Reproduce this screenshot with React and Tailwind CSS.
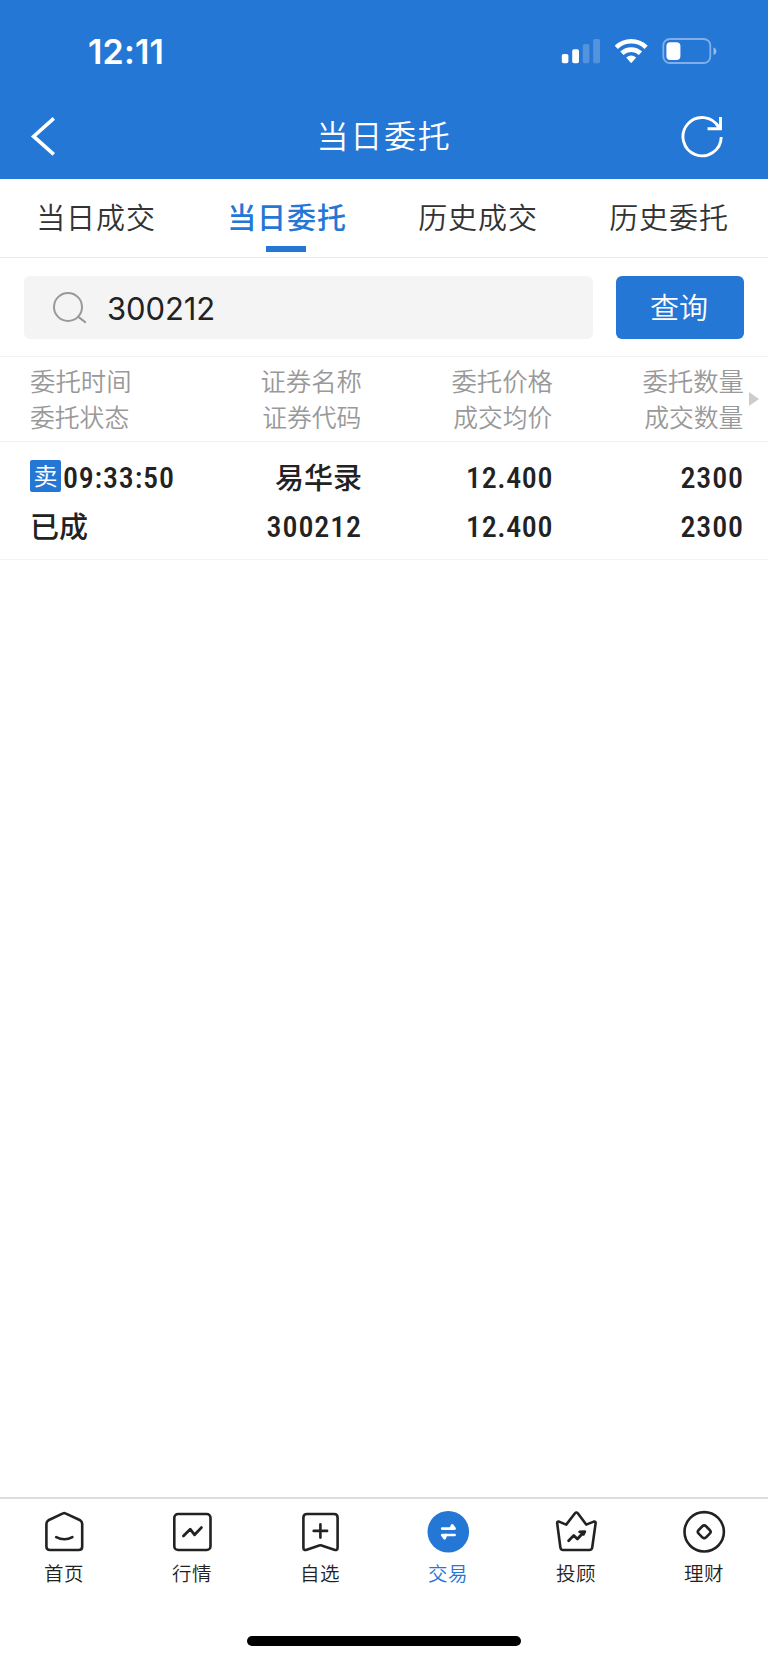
import clsx from 'clsx'

const tabs = ['当日成交', '当日委托', '历史成交', '历史委托']

const columns = [
  ['委托时间', '委托状态'],
  ['证券名称', '证券代码'],
  ['委托价格', '成交均价'],
  ['委托数量', '成交数量'],
]

const orders = [
  {
    side: '卖',
    time: '09:33:50',
    status: '已成',
    name: '易华录',
    code: '300212',
    price: '12.400',
    avgPrice: '12.400',
    amount: '2300',
    filled: '2300',
  },
]

const navItems = [
  { label: '首页', icon: HomeIcon },
  { label: '行情', icon: MarketIcon },
  { label: '自选', icon: WatchlistIcon },
  { label: '交易', icon: TradeIcon },
  { label: '投顾', icon: AdvisorIcon },
  { label: '理财', icon: WealthIcon },
]

function NavSvg({ children }) {
  return (
    <svg
      className="w-[44px] h-[44px]"
      viewBox="0 0 44 44"
      fill="none"
      stroke="currentColor"
      strokeWidth="2.6"
      strokeLinecap="round"
      strokeLinejoin="round"
    >
      {children}
    </svg>
  )
}

function HomeIcon() {
  return (
    <NavSvg>
      <path d="M21 3.4Q22.2 2.8 23.4 3.4L38.2 10.3Q40.2 11.5 40.2 14V36.4Q40.2 40 36.6 40H8Q4.4 40 4.4 36.4V14Q4.4 11.5 6.4 10.3Z" />
      <path d="M14.2 27.2Q22.4 31.4 30.4 27.2" />
    </NavSvg>
  )
}

function MarketIcon() {
  return (
    <NavSvg>
      <rect x="4.3" y="4" width="36.2" height="36" rx="3.8" />
      <path d="M13.4 26L20.2 19.2L24.6 24.8L31.4 17.6" strokeWidth="2.8" />
    </NavSvg>
  )
}

function WatchlistIcon() {
  return (
    <NavSvg>
      <path d="M9 4H36Q39.6 4 39.6 7.6V37.4Q39.6 40.8 36.2 39.7L23.6 35.4Q22.4 35 21.2 35.4L8.8 39.7Q5.4 40.8 5.4 37.4V7.6Q5.4 4 9 4Z" />
      <path d="M22.4 14.2V27.6M15.7 20.9H29.1" />
    </NavSvg>
  )
}

function TradeIcon() {
  return (
    <NavSvg>
      <circle cx="22.3" cy="21.8" r="20.8" fill="currentColor" stroke="none" />
      <path
        d="M16.2 18.6H28.6L26.2 15.4L24.8 18.6M28.6 25H16.2L18.6 28.2L20 25"
        fill="white"
        stroke="white"
        strokeWidth="2.7"
      />
    </NavSvg>
  )
}

function AdvisorIcon() {
  return (
    <NavSvg>
      <path d="M20.8 3.5Q22.4 1.6 24 3.5L32.2 14.6L39.8 11.6Q41.9 11.2 41.6 13.4L38.2 37.6Q37.8 40 35.4 40H9Q6.8 40 6.4 37.6L3.2 13.4Q2.9 11.2 5 11.6L12.2 14.6Z" />
      <path d="M14.6 30.8L19.8 25.4L23.4 29L29.6 22.2M25.6 21.8L30.8 21.6L29.4 24.4" strokeWidth="2.8" />
    </NavSvg>
  )
}

function WealthIcon() {
  return (
    <NavSvg>
      <circle cx="22.2" cy="21.8" r="19.7" />
      <rect x="17" y="16.6" width="10.4" height="10.4" rx="2.6" transform="rotate(45 22.2 21.8)" />
    </NavSvg>
  )
}

function StatusBar() {
  return (
    <div className="h-[94px] pt-[8px] pl-[88px] pr-[51px] flex items-center justify-between">
      <span className="pt-[1px] font-['Inter'] font-semibold text-[34px] tracking-[0.2px] leading-none">
        12:11
      </span>
      <svg className="w-[156px] h-[26px]" viewBox="0 0 156 26" fill="white">
        <rect x="0.8" y="16" width="6.6" height="9.2" rx="1.8" />
        <rect x="11.2" y="11.3" width="6.8" height="13.9" rx="1.8" />
        <rect x="21.8" y="6" width="6.6" height="19.2" rx="1.8" opacity="0.22" />
        <rect x="32.2" y="1" width="6.8" height="24.2" rx="1.8" opacity="0.22" />
        <g fill="none" stroke="white" strokeWidth="4.6">
          <path d="M55.3 9.3A21.5 21.5 0 0 1 85.1 9.3" />
          <path d="M60.9 15.3A13.6 13.6 0 0 1 79.5 15.3" />
        </g>
        <path d="M65.2 19.4Q70.2 15.6 75.2 19.4L70.9 24.6Q70.2 25.3 69.5 24.6Z" />
        <rect
          x="102.3" y="1" width="47" height="24" rx="6.5"
          fill="none" stroke="white" strokeWidth="1.8" opacity="0.42"
        />
        <path d="M152.5 9.4Q155.4 10.4 155.4 13.2T152.5 17Z" opacity="0.5" />
        <rect x="105.4" y="4.2" width="14" height="17.8" rx="4" />
      </svg>
    </div>
  )
}

function TitleBar() {
  return (
    <div className="h-[85px] pl-[30px] pr-[44px] flex items-center justify-between">
      <svg className="w-[28px] h-[42px]" viewBox="0 0 28 42" fill="none" stroke="white" strokeWidth="3.6">
        <path d="M23.8 2.4L3.6 20.4L23.8 38.4" />
      </svg>
      <h1 className="pl-[30px] pb-[5px] text-[32px] tracking-[1.8px] leading-none font-[350]">当日委托</h1>
      <svg className="w-[44px] h-[44px]" viewBox="0 0 44 44" fill="none" stroke="white" strokeWidth="2.9">
        <path d="M41.2 21.9A19.1 19.1 0 1 1 38.8 12.4" />
        <path d="M40.5 2V13.7H27.6" />
        <path d="M36 8.6L40.2 13.6" />
      </svg>
    </div>
  )
}

function OrderRow({ order }) {
  return (
    <div className="h-[118px] pt-[11px] pl-[30px] grid grid-cols-[141px_191px_191px_191px] leading-[49px] text-right text-[29px] font-medium text-[#222222] border-b border-[#f3f3f3]">
      <div className="text-left whitespace-nowrap">
        <div className="h-[49px] flex items-center">
          <span className="w-[31px] h-[32px] mb-[3px] shrink-0 bg-[#2577d6] rounded-[2px] text-white text-[24px] font-normal leading-[30px] text-center">
            {order.side}
          </span>
          <span className="pl-[2px] font-['Roboto'] text-[30px] [font-stretch:75%] tracking-[0.8px]">{order.time}</span>
        </div>
        <div className="-mt-px">{order.status}</div>
      </div>
      <div>
        <div className="-mt-px mb-px">{order.name}</div>
        <div className="font-['Roboto'] text-[30px] [font-stretch:75%] tracking-[0.9px]">{order.code}</div>
      </div>
      <div className="font-['Roboto'] text-[30px] [font-stretch:75%] tracking-[0.6px]">
        <div>{order.price}</div>
        <div>{order.avgPrice}</div>
      </div>
      <div className="font-['Roboto'] text-[30px] [font-stretch:75%] tracking-[0.9px]">
        <div>{order.amount}</div>
        <div>{order.filled}</div>
      </div>
    </div>
  )
}

export default function App() {
  return (
    <div className="w-[768px] h-[1663px] flex flex-col bg-white overflow-hidden font-['Noto_Sans_CJK_SC','Noto_Sans',sans-serif]">
      <header className="bg-[#2577d6] text-white">
        <StatusBar />
        <TitleBar />
      </header>

      {/* Tabs */}
      <nav className="h-[79px] grid grid-cols-[repeat(4,191px)] border-b border-[#ebebeb]">
        {tabs.map((tab) => {
          const active = tab === '当日委托'
          return (
            <button
              key={tab}
              className={clsx(
                'relative pl-[1px] pb-[3px] text-[29px] tracking-[0.9px]',
                active ? 'text-[#2577d6] font-medium' : 'text-[#333333] font-[350]'
              )}
            >
              {tab}
              {active && (
                <span className="absolute left-[75px] bottom-[5px] w-[40px] h-[6px] bg-[#2577d6]" />
              )}
            </button>
          )
        })}
      </nav>

      {/* Search */}
      <div className="h-[99px] px-[24px] flex items-center gap-[23px] border-b border-[#f3f3f3]">
        <div className="flex-1 h-[63px] pl-[28px] flex items-center rounded-[6px] bg-[#f4f4f4]">
          <svg className="w-[36px] h-[34px] mt-[2px]" viewBox="0 0 36 34" fill="none" stroke="#999999" strokeWidth="2">
            <circle cx="16" cy="16" r="14" />
            <path d="M26 25.6L33.8 31.6" />
          </svg>
          <span className="pl-[19px] pt-[4px] font-['Inter'] text-[31px] tracking-[-0.1px] text-[#222222]">
            300212
          </span>
        </div>
        <button className="w-[128px] h-[63px] pr-[2px] rounded-[6px] bg-[#2577d6] text-white text-[29px] font-[350]">
          查询
        </button>
      </div>

      {/* Table head */}
      <div className="relative h-[85px] pt-[5px] pl-[30px] grid grid-cols-[141px_191px_191px_191px] text-right leading-[36px] font-[350] text-[#999999] border-b border-[#f3f3f3]">
        {columns.map(([top, bottom]) => (
          <div key={top} className="first:text-left">
            <div className="text-[25.4px]">{top}</div>
            <div className="pr-[0.6px] text-[24.8px]">{bottom}</div>
          </div>
        ))}
        <svg className="absolute left-[749px] top-[35px] w-[10px] h-[14px]" viewBox="0 0 10 14" fill="#cccccc">
          <path d="M0 0L10 7L0 14Z" />
        </svg>
      </div>

      {orders.map((order) => (
        <OrderRow key={order.time} order={order} />
      ))}

      {/* Bottom navigation */}
      <footer className="mt-auto h-[166px] border-t-2 border-[#dddddd]">
        <div className="pt-[11px] grid grid-cols-6">
          {navItems.map(({ label, icon: Icon }) => (
            <button
              key={label}
              className={clsx(
                'flex flex-col items-center font-[350]',
                label === '交易' ? 'text-[#2577d6]' : 'text-[#222222]'
              )}
            >
              <Icon />
              <span className="pt-[5px] text-[19.5px] tracking-[0.6px] leading-[28px]">{label}</span>
            </button>
          ))}
        </div>
        <div className="w-[274px] h-[10px] mt-[49px] mx-auto rounded-full bg-black" />
      </footer>
    </div>
  )
}
